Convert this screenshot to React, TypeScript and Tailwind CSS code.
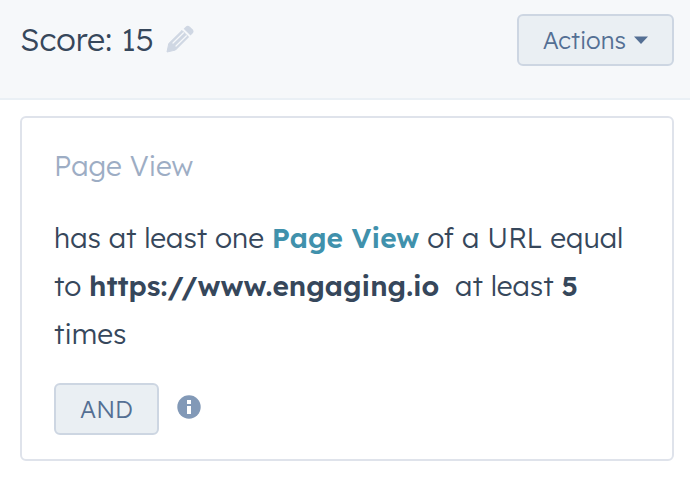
import React from 'react';

const PencilIcon = () => (
  <svg viewBox="0 0 28 28" className="h-7 w-7" fill="#cfd7e3" aria-hidden="true">
    <path
      d="M1 27 2.800 18.500 16 5.500 22.500 12 9.500 25z"
      stroke="#cfd7e3"
      strokeLinejoin="round"
    />
    <path d="m17.700 3.700 2-2q2-1.800 4.200 0l2.600 2.600q2 2.200 0 4.200l-2 2z" />
    <path d="M7 18 17.500 7.800M10 21 20.500 10.800" stroke="#f6f8fa" strokeWidth="1.200" strokeLinecap="round" />
  </svg>
);

const InfoIcon = () => (
  <svg viewBox="0 0 24 24" className="h-6 w-6" aria-hidden="true">
    <circle cx="12" cy="12" r="11.700" fill="#8299b7" />
    <path d="M10 5h4v4h-4zM10 11h4v8h-4z" fill="#fff" />
  </svg>
);

const App: React.FC = () => {
  return (
    <div className="min-h-screen bg-white font-['Lexend','Inter',sans-serif] font-light text-[#36475b]">
      <header className="flex items-start justify-between border-b-2 border-[#eaf0f5] bg-[#f6f8fa] pt-3.5 pr-4 pb-8 pl-5">
        <div className="flex items-center gap-3">
          <h1 className="text-[32px] leading-[50px]">Score: 15</h1>
          <button type="button" aria-label="Edit score">
            <PencilIcon />
          </button>
        </div>
        <button
          type="button"
          className="flex h-[52px] items-center gap-2 rounded-md border-2 border-[#cdd6e2] bg-[#eaeff3] px-6 text-2xl text-[#546f94]"
        >
          Actions
          <svg viewBox="0 0 14 8" className="h-2 w-3.5" fill="currentColor" aria-hidden="true">
            <path d="M0 .5h14L7 8z" />
          </svg>
        </button>
      </header>
      <main className="pt-4 pr-4 pl-5">
        <section className="rounded-md border-2 border-[#dfe3eb] px-8 py-6">
          <h2 className="text-[28px] leading-[48px] text-[#9dadc4]">Page View</h2>
          <p className="mt-6 text-[28px] leading-[48px]">
            has at least one <a href="#page-view" className="font-semibold text-[#4091ac]">Page View</a> of a URL equal
            to <strong className="font-semibold">https://www.engaging.io</strong>&nbsp; at least{' '}
            <strong className="font-semibold">5</strong> times
          </p>
          <div className="mt-[25px] flex items-start gap-[18px]">
            <button
              type="button"
              className="h-[52px] rounded-md border-2 border-[#cdd6e2] bg-[#eaeff3] px-6 text-2xl text-[#546f94]"
            >
              AND
            </button>
            <button type="button" aria-label="More information" className="pt-3">
              <InfoIcon />
            </button>
          </div>
        </section>
      </main>
    </div>
  );
};

export default App;
